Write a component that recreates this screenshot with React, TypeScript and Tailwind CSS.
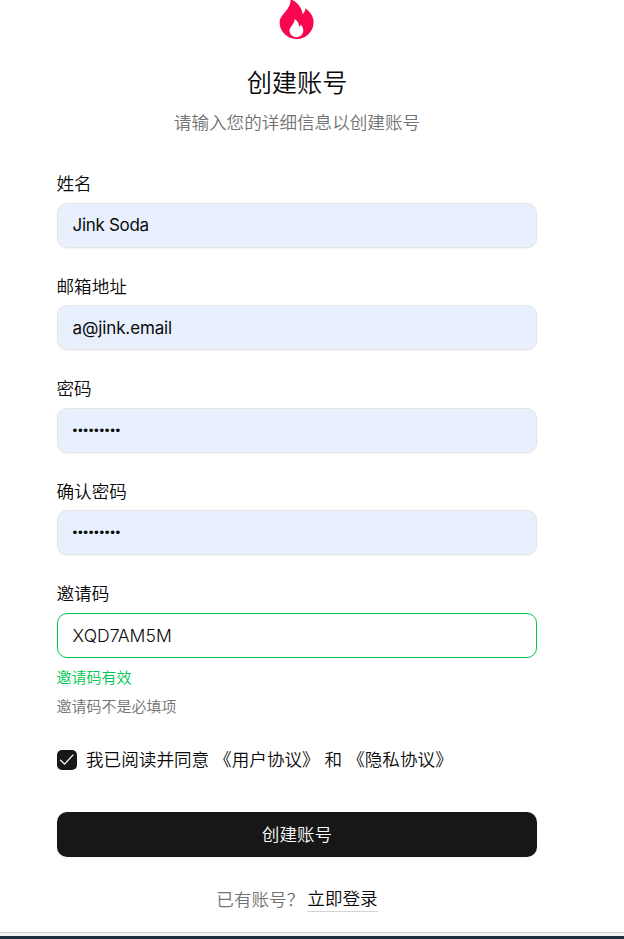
import { useState } from 'react'
import clsx from 'clsx'

const fields = [
  { id: 'name', label: '姓名', type: 'text', value: 'Jink Soda', tracking: 'tracking-[-0.3px]' },
  { id: 'email', label: '邮箱地址', type: 'text', value: 'a@jink.email', tracking: 'tracking-[-0.12px]' },
  { id: 'password', label: '密码', type: 'password', value: 'jinksoda1', tracking: 'tracking-[0.65px]' },
  { id: 'confirm', label: '确认密码', type: 'password', value: 'jinksoda1', tracking: 'tracking-[0.65px]' },
]

function FlameLogo() {
  return (
    <svg width="36" height="40" viewBox="0 0 36 40" className="block">
      <path
        fill="#fa0550"
        d="M11.6 -1C18.5 2.2 22.6 7.2 23.6 14C25.4 12.8 26.4 10.8 26.5 8.3C31.3 12 34.6 16.8 34.6 22C34.6 31.6 27.2 39 17.6 39C8 39 .6 31.6 .6 22.3C.6 14.2 12.4 9.8 11.6 -1Z"
      />
      <path
        fill="#fff"
        d="M15.6 19C18.6 20.6 20.1 23.4 20 26.8C20.9 26.3 21.4 25.4 21.5 24.4C23.4 26 24.3 28.2 24.3 30.3C24.3 34.2 21.3 37.2 17.4 37.2C13.5 37.2 10.5 34.2 10.5 30.6C10.5 26.8 15.7 24.2 15.6 19Z"
      />
    </svg>
  )
}

export default function App() {
  const [values, setValues] = useState<Record<string, string>>(
    Object.fromEntries(fields.map(f => [f.id, f.value]))
  )
  const [code, setCode] = useState('XQD7AM5M')
  const [agreed, setAgreed] = useState(true)

  return (
    <div className="flex h-[939px] w-[624px] flex-col overflow-hidden bg-white font-['Inter','Noto_Sans_CJK_SC',sans-serif] text-[17.6px] font-[350] text-[#0a0a0a]">
      <main className="ml-[57px] flex w-[480px] flex-1 flex-col">
        <div className="flex h-[175px] shrink-0 flex-col items-center">
          <FlameLogo />
          <h1 className="mt-[25px] text-[25.2px] leading-[36px]">创建账号</h1>
          <p className="mt-[9px] leading-[26px] text-[#737373]">请输入您的详细信息以创建账号</p>
        </div>

        {/* Account fields */}
        <form className="flex flex-col gap-[30px]" onSubmit={e => e.preventDefault()}>
          {fields.map(f => (
            <div key={f.id} className="grid gap-[10px]">
              <label htmlFor={f.id} className="-ml-[0.5px] leading-[17.5px]">{f.label}</label>
              <input
                id={f.id}
                type={f.type}
                value={values[f.id]}
                onChange={e => setValues({ ...values, [f.id]: e.target.value })}
                className={clsx(
                  'h-[45px] w-full rounded-[10px] border border-[#e5e5e5] bg-[#e8f0fe] px-[14.5px] shadow-xs outline-none',
                  f.type === 'password' ? "font-['Liberation_Sans'] text-[13.5px]" : 'text-[17px] font-[380]',
                  f.tracking
                )}
              />
            </div>
          ))}

          {/* Invite code */}
          <div className="grid gap-[10px]">
            <label htmlFor="code" className="-ml-[0.5px] leading-[17.5px]">邀请码</label>
            <input
              id="code"
              value={code}
              onChange={e => setCode(e.target.value)}
              className="h-[45px] w-full rounded-[10px] border border-[#00c951] px-[14.5px] font-[350] tracking-[0.02px] shadow-xs outline-none"
            />
            <p className="-ml-[0.5px] text-[15px] leading-[19.5px] text-[#00c951]">邀请码有效</p>
            <p className="-ml-[0.5px] text-[15px] leading-[19.5px] text-[#737373]">邀请码不是必填项</p>
          </div>

          <label className="-mt-[2px] flex h-[30px] items-center">
            <input
              type="checkbox"
              checked={agreed}
              onChange={e => setAgreed(e.target.checked)}
              className="sr-only"
            />
            <span className="flex size-5 items-center justify-center rounded-[5px] bg-[#171717] text-[#fafafa]">
              {agreed && (
                <svg width="17.5" height="17.5" viewBox="0 0 24 24" fill="none" stroke="currentColor" strokeWidth="1.8">
                  <path d="M21 5L9 18L3 12" />
                </svg>
              )}
            </span>
            <span className="ml-[9px] whitespace-pre leading-[26px]">我已阅读并同意 《用户协议》 和 《隐私协议》</span>
          </label>

          <button className="mt-[7.5px] h-[45px] rounded-[10px] bg-[#171717] pt-[2px] text-[#fafafa] shadow-xs">创建账号</button>
        </form>

        <div className="mt-[29px] flex items-center justify-center leading-[25px] text-[#737373]">
          <span>已有账号？</span>
          <a href="#" className="ml-[3px] border-b border-[#d4d4d4] pt-px leading-[24px] text-[#0a0a0a]">立即登录</a>
        </div>
      </main>
      <div className="h-[4px] shrink-0 border-t border-[#d4d4d4] bg-[#f3f3f3]" />
      <div className="h-[3px] shrink-0 bg-[#1e3040]" />
    </div>
  )
}
